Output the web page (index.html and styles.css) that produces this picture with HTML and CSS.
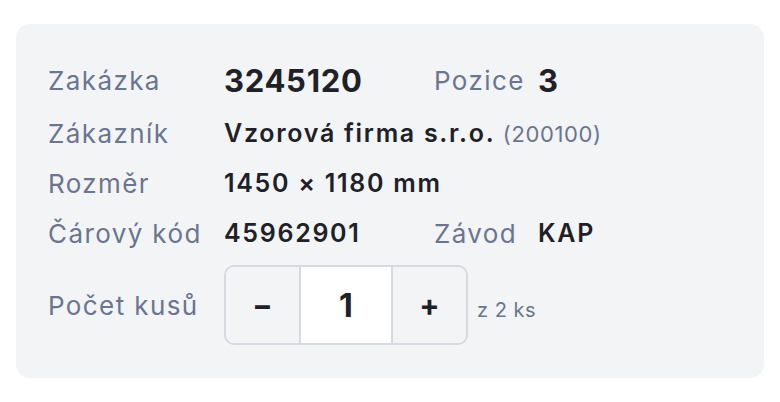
FILE: index.html
```html
<!DOCTYPE html>
<html lang="cs">
<head>
    <meta charset="UTF-8">
    <title>Detail pozice</title>
    <link rel="stylesheet" href="styles.css">
</head>
<body>
    <div class="card">
        <div class="info-grid">
            <span class="label">Zakázka</span>
            <span class="value big">3245120</span>
            <span class="label">Pozice</span>
            <span class="value big">3</span>

            <span class="label">Zákazník</span>
            <span class="value wide">Vzorová firma s.r.o. <span class="muted">(200100)</span></span>

            <span class="label">Rozměr</span>
            <span class="value wide">1450 × 1180 mm</span>

            <span class="label">Čárový kód</span>
            <span class="value">45962901</span>
            <span class="label">Závod</span>
            <span class="value">KAP</span>

            <span class="label">Počet kusů</span>
            <div class="qty wide">
                <div class="stepper">
                    <button class="step">&minus;</button>
                    <span class="count">1</span>
                    <button class="step">+</button>
                </div>
                <span class="total">z 2 ks</span>
            </div>
        </div>
    </div>
</body>
</html>
```

FILE: styles.css
```css
/* Page */
body {
    margin: 0;
    padding: 24px 16px;
    background: #fff;
    font-family: 'Inter', 'Noto Sans', sans-serif;
}

/* Card */
.card {
    background: #f2f4f6;
    border-radius: 14px;
    padding: 28px 32px 33px 32px;
}

/* Info grid */
.info-grid {
    display: grid;
    grid-template-columns: 176px 210px 104px 1fr;
    grid-template-rows: 56px 50px 50px 50px 87px;
    align-items: center;
}
.info-grid > :nth-last-child(1),
.info-grid > :nth-last-child(2) {
    margin-top: 7px;
}

.label {
    font-size: 26px;
    letter-spacing: 1.4px;
    color: #6b7490;
    white-space: nowrap;
}
.value {
    font-size: 25px;
    font-weight: 600;
    letter-spacing: 1.7px;
    color: #1e2128;
    white-space: nowrap;
}
.value.big {
    font-size: 31px;
    font-weight: 700;
    letter-spacing: 0.7px;
}
.wide {
    grid-column: 2 / 5;
}
.muted {
    font-size: 22px;
    font-weight: 400;
    letter-spacing: 0.6px;
    color: #6b7490;
}

/* Quantity stepper */
.qty {
    display: flex;
    align-items: center;
}
.stepper {
    display: flex;
    height: 80px;
    border: 2px solid #d6d9df;
    border-radius: 10px;
    overflow: hidden;
    box-sizing: border-box;
}
.step {
    width: 73px;
    border: none;
    background: #f2f4f6;
    font-family: inherit;
    font-size: 30px;
    font-weight: 700;
    color: #1e2128;
    padding: 0;
}
.count {
    width: 90px;
    background: #fff;
    border-left: 2px solid #d6d9df;
    border-right: 2px solid #d6d9df;
    display: flex;
    align-items: center;
    justify-content: center;
    font-size: 32px;
    font-weight: 700;
    color: #1e2128;
}
.total {
    margin-left: 9px;
    margin-top: 10px;
    font-size: 20px;
    letter-spacing: 0.5px;
    color: #6b7490;
}
```
